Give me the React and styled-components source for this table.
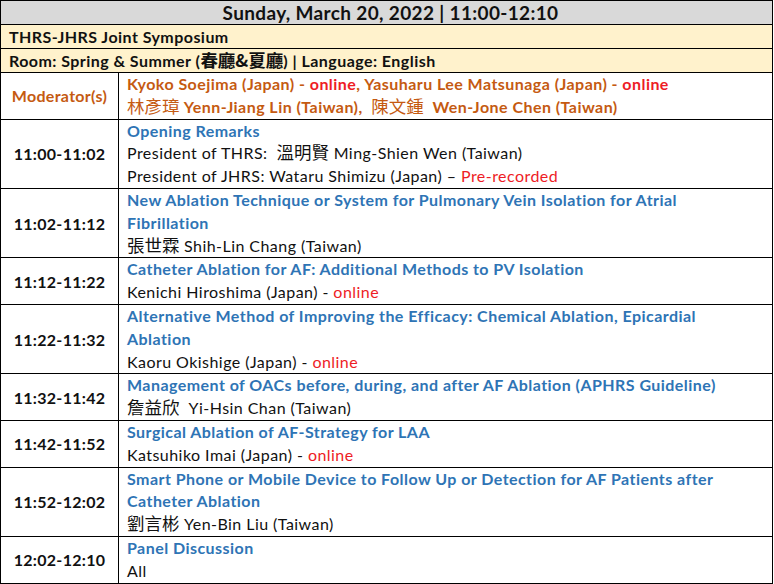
import styled, { createGlobalStyle } from "styled-components";

const GlobalStyle = createGlobalStyle`
  body {
    margin: 0;
    background: #fff;
    font-family: Lato, "Noto Sans CJK TC", sans-serif;
  }
`;

const Schedule = styled.table`
  width: 773px;
  border-collapse: collapse;
  table-layout: fixed;
  color: #111;
  font-size: 16px;
  letter-spacing: 0.45px;
`;

const BannerCell = styled.td`
  border: 1px solid #000;
  padding: 0 0 0 8px;
  height: 23px;
  line-height: 23px;
  font-weight: 700;
  white-space: nowrap;
  overflow: hidden;
  background: ${(p) => (p.$tone === "gray" ? "#d9d9d9" : "#fff2cc")};
  text-align: ${(p) => (p.$center ? "center" : "left")};
  font-size: ${(p) => (p.$big ? "19px" : "16px")};
  letter-spacing: ${(p) => (p.$big ? "0.35px" : "0.45px")};
`;

const BannerText = styled.div`
  height: 23px;
  line-height: 23px;
`;

const TimeCell = styled.td`
  width: 117px;
  border: 1px solid #000;
  padding: 0;
  text-align: center;
  vertical-align: middle;
  font-weight: 700;
  letter-spacing: 0.3px;
  color: ${(p) => (p.$accent ? "#c55a11" : "#111")};
`;

const ContentCell = styled.td`
  border: 1px solid #000;
  padding: 0 0 0 8px;
  vertical-align: top;
  line-height: 22.8px;
  white-space: nowrap;
`;

const Line = styled.div`
  height: 22.8px;
  line-height: 22.8px;
  overflow: visible;
`;

const Title = styled(Line)`
  color: #2e74b5;
  font-weight: 700;
`;

const ModLine = styled(Line)`
  color: #c55a11;
  font-weight: 700;
`;

const Cjk = styled.span`
  font-family: "Noto Sans CJK TC", sans-serif;
  font-size: 17.5px;
  line-height: 1;
  font-weight: ${(p) => (p.$bold ? 700 : 400)};
  letter-spacing: 0;
`;

const Note = styled.span`
  color: #ee1c25;
`;

const sessions = [
  {
    time: "11:00-11:02",
    title: ["Opening Remarks"],
    people: [
      <>President of THRS:&nbsp; <Cjk>溫明賢</Cjk> Ming-Shien Wen (Taiwan)</>,
      <>President of JHRS: Wataru Shimizu (Japan) – <Note>Pre-recorded</Note></>,
    ],
  },
  {
    time: "11:02-11:12",
    title: [
      "New Ablation Technique or System for Pulmonary Vein Isolation for Atrial",
      "Fibrillation",
    ],
    people: [<><Cjk>張世霖</Cjk> Shih-Lin Chang (Taiwan)</>],
  },
  {
    time: "11:12-11:22",
    title: ["Catheter Ablation for AF: Additional Methods to PV Isolation"],
    people: [<>Kenichi Hiroshima (Japan) - <Note>online</Note></>],
  },
  {
    time: "11:22-11:32",
    title: [
      "Alternative Method of Improving the Efficacy: Chemical Ablation, Epicardial",
      "Ablation",
    ],
    people: [<>Kaoru Okishige (Japan) - <Note>online</Note></>],
  },
  {
    time: "11:32-11:42",
    title: ["Management of OACs before, during, and after AF Ablation (APHRS Guideline)"],
    people: [<><Cjk>詹益欣</Cjk>&nbsp; Yi-Hsin Chan (Taiwan)</>],
  },
  {
    time: "11:42-11:52",
    title: ["Surgical Ablation of AF-Strategy for LAA"],
    people: [<>Katsuhiko Imai (Japan) - <Note>online</Note></>],
  },
  {
    time: "11:52-12:02",
    title: [
      "Smart Phone or Mobile Device to Follow Up or Detection for AF Patients after",
      "Catheter Ablation",
    ],
    people: [<><Cjk>劉言彬</Cjk> Yen-Bin Liu (Taiwan)</>],
  },
  {
    time: "12:02-12:10",
    title: ["Panel Discussion"],
    people: ["All"],
  },
];

const App = () => {
  return (
    <>
      <GlobalStyle />
      <Schedule>
        <colgroup>
          <col style={{ width: 118 }} />
          <col />
        </colgroup>
        <tbody>
          <tr>
            <BannerCell colSpan={2} $tone="gray" $center $big>
              <BannerText>Sunday, March 20, 2022 | 11:00-12:10</BannerText>
            </BannerCell>
          </tr>
          <tr>
            <BannerCell colSpan={2}>
              <BannerText>THRS-JHRS Joint Symposium</BannerText>
            </BannerCell>
          </tr>
          <tr>
            <BannerCell colSpan={2}>
              <BannerText>
                Room: Spring &amp; Summer (<Cjk $bold>春廳&amp;夏廳</Cjk>) | Language:
                English
              </BannerText>
            </BannerCell>
          </tr>
          <tr>
            <TimeCell $accent>Moderator(s)</TimeCell>
            <ContentCell>
              <ModLine>
                Kyoko Soejima (Japan) - <Note>online</Note>, Yasuharu Lee Matsunaga
                (Japan) - <Note>online</Note>
              </ModLine>
              <ModLine>
                <Cjk>林彥璋</Cjk> Yenn-Jiang Lin (Taiwan),&nbsp; <Cjk>陳文鍾</Cjk>&nbsp;
                Wen-Jone Chen (Taiwan)
              </ModLine>
            </ContentCell>
          </tr>
          {sessions.map((s) => (
            <tr key={s.time}>
              <TimeCell>{s.time}</TimeCell>
              <ContentCell>
                {s.title.map((t) => (
                  <Title key={t}>{t}</Title>
                ))}
                {s.people.map((p, i) => (
                  <Line key={i}>{p}</Line>
                ))}
              </ContentCell>
            </tr>
          ))}
        </tbody>
      </Schedule>
    </>
  );
};

export default App;
